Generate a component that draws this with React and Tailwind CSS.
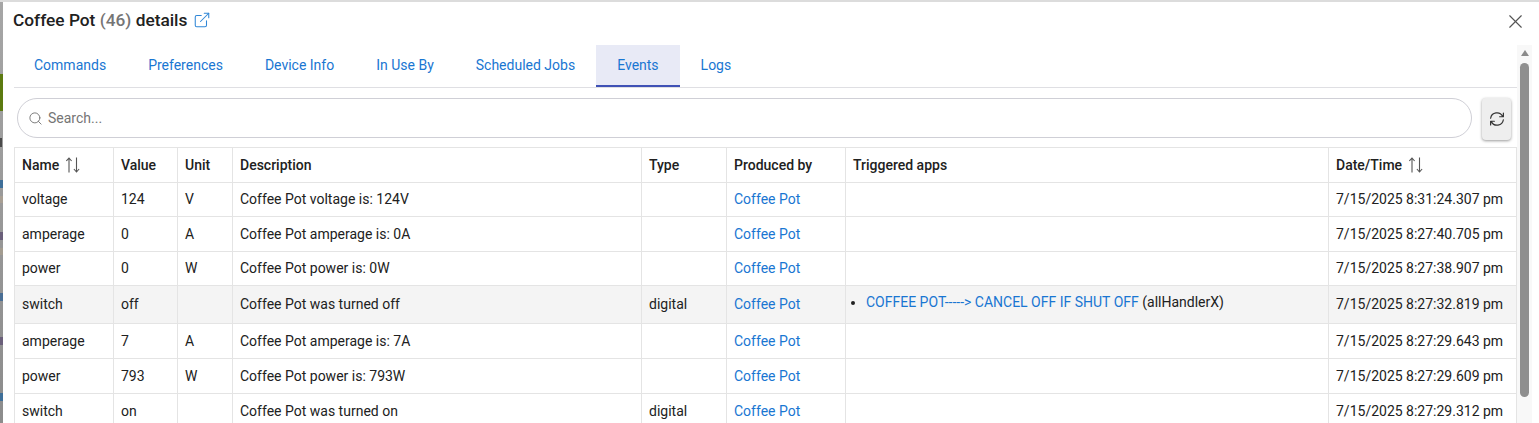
import React from 'react';
import { ExternalLink, X, Search } from 'lucide-react';

const Sort = () => (
  <svg width="14" height="16" viewBox="0 0 14 16" fill="none" stroke="#555" strokeWidth="1.1" className="ml-[7px]">
    <path d="M3 15.5V1M.4 4 3 1l2.6 3M10.5 0.5V15M7.9 12l2.6 3 2.6-3" />
  </svg>
);

const Refresh = () => (
  <svg width="18" height="18" viewBox="0 0 24 24" fill="none" stroke="#333" strokeWidth="1.6" strokeLinecap="round" strokeLinejoin="round">
    <path d="M3.5 11a8.5 8.5 0 0 1 16-2.5M20.5 4v5h-5M20.5 13a8.5 8.5 0 0 1-16 2.5M3.5 20v-5h5" />
  </svg>
);

const rows = [
  ['voltage', '124', 'V', 'Coffee Pot voltage is: 124V', '', '7/15/2025 8:31:24.307 pm', 'h-[34px]'],
  ['amperage', '0', 'A', 'Coffee Pot amperage is: 0A', '', '7/15/2025 8:27:40.705 pm', 'h-[35px]'],
  ['power', '0', 'W', 'Coffee Pot power is: 0W', '', '7/15/2025 8:27:38.907 pm', 'h-[34px]'],
  ['switch', 'off', '', 'Coffee Pot was turned off', 'digital', '7/15/2025 8:27:32.819 pm', 'h-[38px] bg-[#f4f4f4]', true],
  ['amperage', '7', 'A', 'Coffee Pot amperage is: 7A', '', '7/15/2025 8:27:29.643 pm', 'h-[35px]'],
  ['power', '793', 'W', 'Coffee Pot power is: 793W', '', '7/15/2025 8:27:29.609 pm', 'h-[35px]'],
  ['switch', 'on', '', 'Coffee Pot was turned on', 'digital', '7/15/2025 8:27:29.312 pm', 'h-[35px]'],
];

const th = 'border border-[#e4e4e4] px-[7px] text-left font-medium align-middle';
const td = 'border border-[#e4e4e4] px-[7px] align-middle';

export default function App() {
  const tabs = ['Commands', 'Preferences', 'Device Info', 'In Use By', 'Scheduled Jobs', 'Events', 'Logs'];
  return (
    <div className="relative h-[423px] w-[1539px] overflow-hidden bg-white text-[14px] text-[#212121] [font-family:Roboto,sans-serif]">
      <div className="absolute left-0 top-0 h-full w-[3px] bg-gradient-to-b from-[#a6a6a6] to-[#8c8c8c]" />
      <div className="absolute left-0 top-[74px] h-[37px] w-[3px] bg-[#5c7a10]" />
      <div className="absolute left-0 top-[138px] h-[9px] w-[2px] bg-[#4a4a4a]" />
      <div className="absolute left-0 top-[180px] h-[8px] w-[3px] bg-[#3f6f99]" />
      <div className="absolute left-0 top-[196px] h-[7px] w-[3px] bg-[#a89f94]" />
      <div className="absolute left-0 top-[232px] h-[8px] w-[3px] bg-[#6a5f7a]" />
      <div className="absolute left-0 top-[248px] h-[7px] w-[3px] bg-[#a39c90]" />
      <div className="absolute left-0 top-[293px] h-[8px] w-[3px] bg-[#4a6f95]" />
      <div className="absolute left-0 top-[337px] h-[8px] w-[3px] bg-[#6a5f7a]" />
      <div className="absolute left-0 top-[393px] h-[8px] w-[3px] bg-[#3f6f99]" />
      <div className="absolute left-0 top-0 h-[2px] w-full bg-[#dcdcdc]" />
      <div className="pl-[14px] pr-[21px]">
        <div className="flex h-[45px] items-start justify-between pt-[10px]">
          <div className="flex items-center text-[17.3px] font-medium leading-[20px]">
            <span className="ml-[-1px]">Coffee Pot <span className="text-[#757575]">(46)</span> details</span>
            <ExternalLink size={18} strokeWidth={1.4} className="ml-[6px] text-[#2f86d6]" />
          </div>
          <X size={23} strokeWidth={1.2} className="mr-[-9px] text-[#555]" />
        </div>
        <div className="flex h-[43px] w-[1503px] border-b border-[#dfdfe3]">
          {tabs.map((t, i) => (
            <div key={t} className={`flex h-[42px] items-center border-b-2 px-[21px] text-[#1976d2] ${i === 0 ? 'ml-[-1px]' : ''} ${t === 'Events' ? 'border-[#3f51b5] bg-[#e8eaf6]' : 'border-transparent'}`}>{t}</div>
          ))}
        </div>
        <div className="mt-[10px] flex items-start">
          <div className="ml-[3px] flex h-[40px] w-[1455px] items-center rounded-full border border-[#cfcfd6] pl-[10px] text-[#757575]">
            <Search size={15} strokeWidth={1.5} className="mr-[5px]" />
            <span>Search...</span>
          </div>
          <div className="ml-[10px] flex h-[42px] w-[29px] items-center justify-center rounded bg-[#eeeeee] shadow-[0_1px_3px_rgba(0,0,0,0.4)]">
            <Refresh />
          </div>
        </div>
        <table className="mt-[7px] w-[1503px] table-fixed border-collapse">
          <colgroup>
            <col className="w-[99px]" /><col className="w-[64px]" /><col className="w-[55px]" /><col className="w-[409px]" /><col className="w-[85px]" /><col className="w-[119px]" /><col className="w-[483px]" /><col />
          </colgroup>
          <thead>
            <tr className="h-[35px]">
              <th className={th}><div className="flex items-center">Name <Sort /></div></th>
              <th className={th}>Value</th>
              <th className={th}>Unit</th>
              <th className={th}>Description</th>
              <th className={th}>Type</th>
              <th className={th}>Produced by</th>
              <th className={th}>Triggered apps</th>
              <th className={th}><div className="flex items-center">Date/Time <Sort /></div></th>
            </tr>
          </thead>
          <tbody>
            {rows.map((r, i) => (
              <tr key={i} className={r[6]}>
                <td className={td}>{r[0]}</td>
                <td className={td}>{r[1]}</td>
                <td className={td}>{r[2]}</td>
                <td className={td}>{r[3]}</td>
                <td className={td}>{r[4]}</td>
                <td className={`${td} text-[#1976d2]`}>Coffee Pot</td>
                <td className={td}>
                  {r[7] && (
                    <ul className="mb-[5px] list-disc pl-[13px]">
                      <li><span className="text-[#1976d2]">COFFEE POT-----&gt; CANCEL OFF IF SHUT OFF</span> (allHandlerX)</li>
                    </ul>
                  )}
                </td>
                <td className={`${td} whitespace-nowrap`}>{r[5]}</td>
              </tr>
            ))}
          </tbody>
        </table>
      </div>
      <div className="absolute right-[7px] top-[45px] flex h-[378px] w-[15px] flex-col items-center bg-[#f8f8f8]">
        <div className="mt-[5px] h-0 w-0 border-x-[4.5px] border-b-[6px] border-x-transparent border-b-[#8a8a8a]" />
        <div className="mt-[7px] h-[334px] w-[9px] rounded-full bg-[#8f8f8f]" />
      </div>
    </div>
  );
}
